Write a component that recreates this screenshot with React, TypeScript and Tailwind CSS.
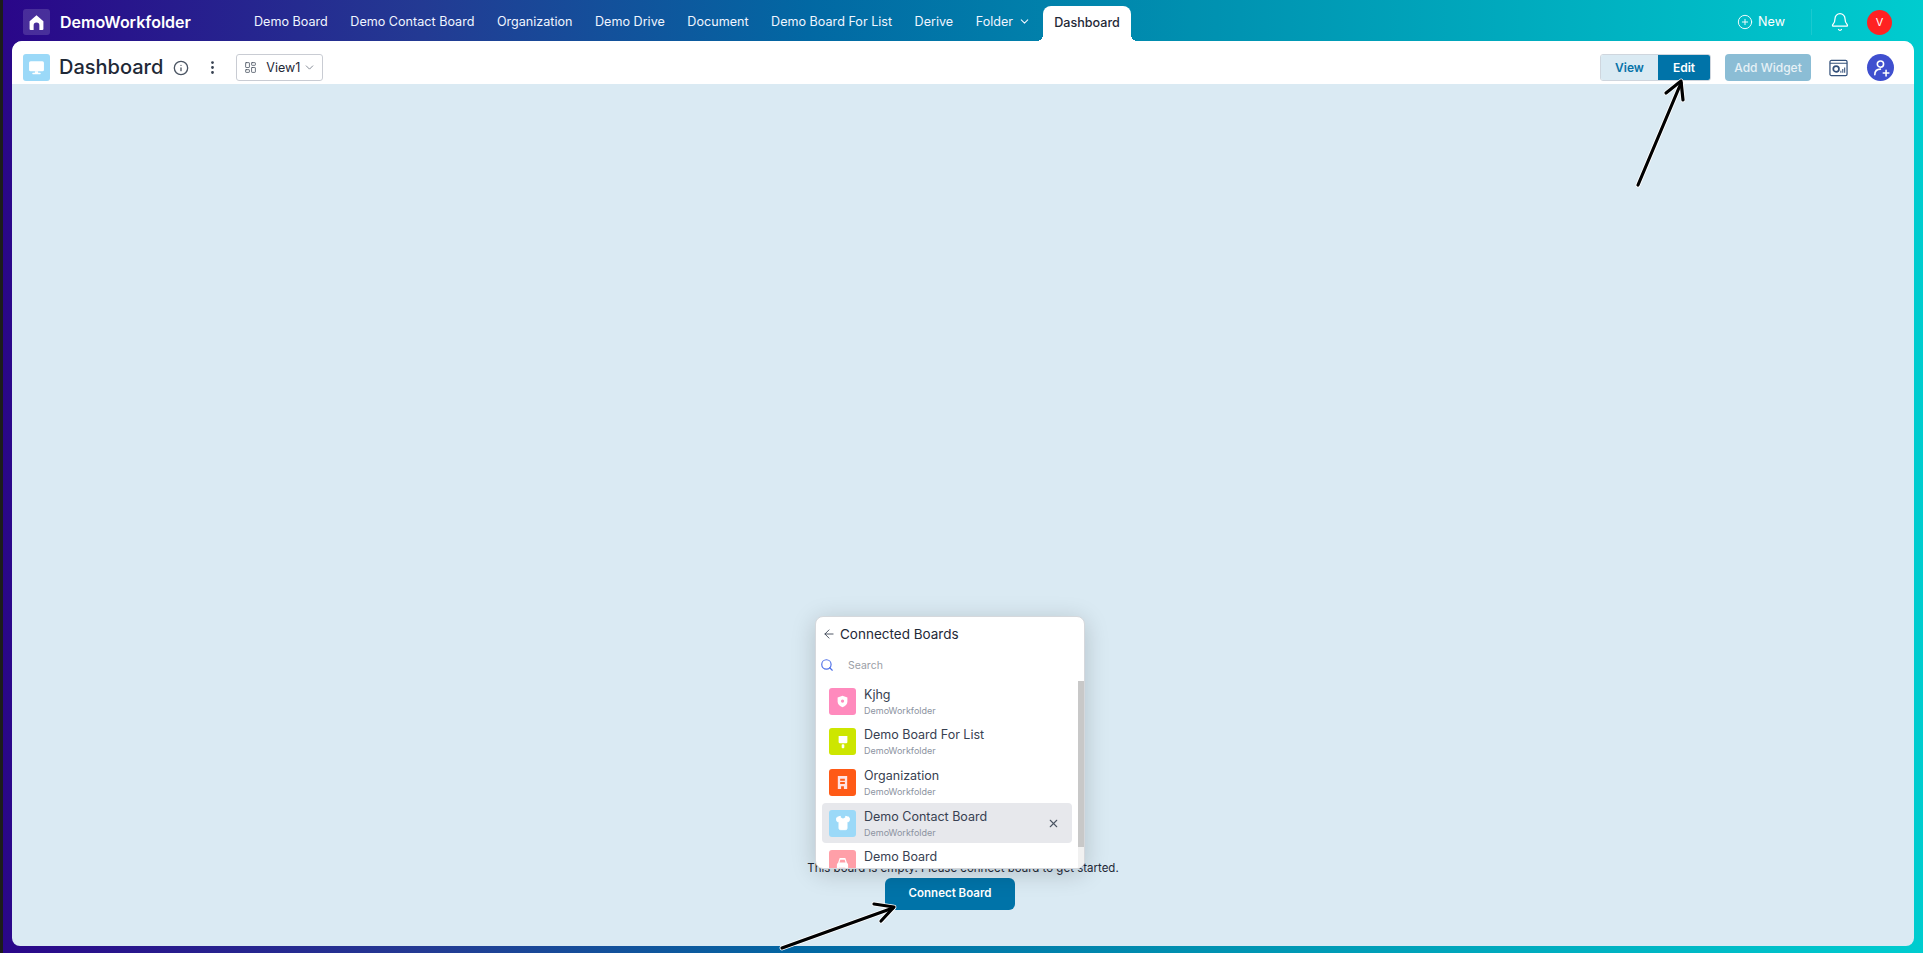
import { ArrowLeft, Bell, ChevronDown, CirclePlus, EllipsisVertical, Info, LayoutDashboard, Search, Shirt, X } from "lucide-react";

const navItems = ["Demo Board", "Demo Contact Board", "Organization", "Demo Drive", "Document", "Demo Board For List", "Derive"];

const boards = [
  { name: "Kjhg", color: "bg-[#ff8abd]", icon: "shield" },
  { name: "Demo Board For List", color: "bg-[#cde600]", icon: "brush" },
  { name: "Organization", color: "bg-[#ff5a16]", icon: "building" },
  { name: "Demo Contact Board", color: "bg-[#9bd9f8]", icon: "shirt", active: true },
  { name: "Demo Board", color: "bg-[#ff9fa8]", icon: "car" },
];

function BoardIcon({ icon }: { icon: string }) {
  if (icon === "shield") {
    return (
      <svg viewBox="0 0 16 16" className="h-[13px] w-[13px]" fill="white">
        <path d="M8 1 14 3v5c0 3.500-2.600 5.800-6 7-3.400-1.200-6-3.500-6-7V3z" />
        <circle cx="8" cy="7.500" r="2" fill="#ff8abd" />
      </svg>
    );
  }
  if (icon === "brush") {
    return (
      <svg viewBox="0 0 16 16" className="h-[14px] w-[14px]" fill="white">
        <path d="M3 1h10v7a1.500 1.500 0 0 1-1.500 1.500H4.500A1.500 1.500 0 0 1 3 8z" />
        <rect x="6.500" y="10.500" width="3" height="4.500" rx="1" />
      </svg>
    );
  }
  if (icon === "building") {
    return (
      <svg viewBox="0 0 16 16" className="h-[15px] w-[15px]" fill="#ffe3e3">
        <path fillRule="evenodd" d="M3 1h10v14H9.500v-3h-3v3H3zM5.500 4v2h5V4zm0 3.500v2h5v-2z" />
      </svg>
    );
  }
  if (icon === "shirt") {
    return <Shirt className="h-4 w-4 fill-white text-white" strokeWidth={1.500} />;
  }
  return (
    <svg viewBox="0 0 16 16" className="h-[15px] w-[15px]" fill="white">
      <path fillRule="evenodd" d="M5 2h6l1.800 5.500c.7.400 1.200 1 1.200 2V14h-3v-1.500H4V14H2V9.500c0-1 .5-1.600 1.200-2zM5.700 4 4.800 7h6.400l-.9-3z" />
    </svg>
  );
}

function ArrowMark({ points, head }: { points: string; head: string }) {
  return (
    <>
      <polyline points={points} fill="none" stroke="white" strokeWidth="4.800" strokeLinecap="round" />
      <polyline points={head} fill="none" stroke="white" strokeWidth="4.800" strokeLinecap="round" strokeLinejoin="round" />
      <polyline points={points} fill="none" stroke="black" strokeWidth="3.200" strokeLinecap="round" />
      <polyline points={head} fill="none" stroke="black" strokeWidth="3.200" strokeLinecap="round" strokeLinejoin="round" />
    </>
  );
}

export default function App() {
  return (
    <div className="relative flex h-[953px] w-[1923px] flex-col overflow-hidden bg-[linear-gradient(90deg,#2a0689_0%,#233a93_22%,#0268a3_42%,#0090b0_62%,#00cccf_100%)] pl-[12px] pr-[9px] pb-[7px] font-['Inter',sans-serif]">
      <div className="absolute bottom-0 left-0 top-0 w-[3px] bg-[#1c1c1c]" />

      {/* Top bar */}
      <div className="-ml-[12px] -mr-[9px] flex h-[41px] shrink-0 items-center pl-[23px] pr-[31px] pt-[3px]">
        <div className="flex h-[26px] w-[27px] items-center justify-center rounded-[3px] bg-white/15">
          <svg viewBox="0 0 16 16" className="h-[17px] w-[17px]" fill="white">
            <path fillRule="evenodd" d="M8 1.200 14.500 6.800V14a1 1 0 0 1-1 1h-2.800v-4.200a2.700 2.700 0 0 0-5.400 0V15H2.500a1 1 0 0 1-1-1V6.800z" />
          </svg>
        </div>
        <span className="ml-[10px] w-[194px] text-[16px] font-semibold text-white">DemoWorkfolder</span>
        <div className="flex items-center self-stretch">
          {navItems.map((item) => (
            <span key={item} className="mr-[22.5px] text-[12.6px] text-[#f0f5ff]">
              {item}
            </span>
          ))}
          <span className="flex items-center gap-[5px] text-[12.6px] text-[#f0f5ff]">
            Folder
            <ChevronDown className="h-[13px] w-[13px]" />
          </span>
          <span className="relative ml-[12px] flex h-[35px] w-[88px] items-center justify-center self-end rounded-t-[8px] bg-white pb-[1px] text-[12.6px] font-medium text-[#1f2937]">
            <span className="absolute -left-[6px] bottom-0 h-[6px] w-[6px] bg-[radial-gradient(circle_at_0_0,transparent_6px,white_6px)]" />
            Dashboard
            <span className="absolute -right-[6px] bottom-0 h-[6px] w-[6px] bg-[radial-gradient(circle_at_100%_0,transparent_6px,white_6px)]" />
          </span>
        </div>
        <div className="ml-auto flex items-center">
          <CirclePlus className="h-[16px] w-[16px] text-white" strokeWidth={1.400} />
          <span className="ml-[5px] text-[12.6px] text-white">New</span>
          <div className="ml-[26px] h-[26px] w-px bg-white/10" />
          <Bell className="ml-[18px] h-[20px] w-[20px] text-white" strokeWidth={1.500} />
          <div className="ml-[17px] flex h-[25px] w-[25px] items-center justify-center rounded-full bg-[#ff2222] text-[11px] text-white">V</div>
        </div>
      </div>

      {/* Panel */}
      <div className="flex min-h-0 flex-1 flex-col overflow-hidden rounded-t-[10px] rounded-b-[8px] bg-[#daeaf3]">
        <div className="flex h-[43px] shrink-0 items-start bg-white pl-[11px] pr-[20px] pt-[13px]">
          <div className="flex h-[27px] w-[27px] items-center justify-center rounded-[3px] bg-[#9bd9f8]">
            <svg viewBox="0 0 16 16" className="h-[17px] w-[17px]" fill="white">
              <rect x="1" y="2" width="14" height="9.500" rx="1.500" />
              <rect x="6.500" y="11.500" width="3" height="2" />
              <rect x="4" y="13" width="8" height="1.300" rx="0.600" />
            </svg>
          </div>
          <span className="ml-[9px] text-[20px] font-medium leading-[27px] text-[#1f2937]">Dashboard</span>
          <Info className="ml-[10px] mt-[6px] h-[16px] w-[16px] text-[#4b5563]" />
          <EllipsisVertical className="ml-[15px] mt-[5px] h-[17px] w-[17px] text-[#374151]" />
          <div className="ml-[15px] flex h-[27px] w-[87px] items-center rounded-[3px] border border-[#c9ccd3] bg-white pl-[7px]">
            <LayoutDashboard className="h-[13px] w-[13px] text-[#4b5563]" strokeWidth={1.500} />
            <span className="ml-[9px] mt-[1px] text-[12.5px] text-[#1f2937]">View1</span>
            <ChevronDown className="ml-[3px] h-[13px] w-[13px] text-[#6b7280]" strokeWidth={1.500} />
          </div>

          <div className="ml-auto flex h-[27px] w-[111px] overflow-hidden rounded-[3px] border border-[#cfd6de]">
            <span className="flex w-[57px] items-center justify-center bg-[#daeaf3] text-[12px] font-semibold text-[#0873a8]">View</span>
            <span className="flex flex-1 items-center justify-center bg-[#0073a8] text-[12px] font-semibold text-white">Edit</span>
          </div>
          <button className="ml-[14px] h-[27px] w-[86px] rounded-[4px] bg-[#8bbdd5] text-[12px] font-medium text-[#e6f1f6]">Add Widget</button>
          <svg viewBox="0 0 20 18" className="ml-[18px] mt-[5px] h-[18px] w-[19px]" fill="none">
            <rect x="1" y="1" width="18" height="16" rx="1.500" stroke="#33507a" strokeWidth="1.300" />
            <path d="M1 4h18" stroke="#33507a" strokeWidth="1.300" />
            <circle cx="7.500" cy="10" r="3" stroke="#33507a" strokeWidth="1.800" />
            <path d="M12.500 14v-2M14.500 14v-4M16.500 14V8.500" stroke="#33507a" strokeWidth="1.100" />
          </svg>
          <div className="ml-[19px] flex h-[27px] w-[27px] items-center justify-center rounded-full bg-[#3f4fcf]">
            <svg viewBox="0 0 16 16" className="h-[18px] w-[18px]" fill="none" stroke="white" strokeWidth="1.400" strokeLinecap="round">
              <circle cx="7.500" cy="4.500" r="2.800" />
              <path d="M2.500 14c0-3 2-5 5-5M10 12.500h5M12.500 10v5" />
            </svg>
          </div>
        </div>

        {/* Empty board */}
        <div className="relative flex flex-1 flex-col items-center justify-end pb-[36px]">
          <p className="text-[11.5px] leading-[20px] text-[#1f2937]">This board is empty. Please connect board to get started.</p>
          <div className="mr-[26px] flex h-[32px] w-[130px] items-center justify-center rounded-[6px] bg-[#0073a8] pb-[1px] text-[11.5px] font-semibold text-white">
            Connect Board
          </div>

          {/* Connected boards popover */}
          <div className="absolute bottom-[77px] left-[803px] flex h-[253px] w-[270px] flex-col overflow-hidden rounded-[8px] border border-[#d5d8dc] bg-white shadow-[0_4px_24px_rgba(0,0,0,0.18)]">
            <div className="flex h-[32px] shrink-0 items-center pl-[6px] pt-[2px]">
              <ArrowLeft className="h-[14px] w-[14px] text-[#374151]" strokeWidth={1.500} />
              <span className="ml-[4px] text-[13.5px] text-[#1f2937]">Connected Boards</span>
            </div>
            <div className="flex h-[32px] shrink-0 items-center pl-[4px] pt-[2px]">
              <Search className="h-[14px] w-[14px] -translate-y-[1px] text-[#4f70e8]" />
              <span className="ml-[14px] text-[10.5px] text-[#9a9ea6]">Search</span>
            </div>
            <div className="relative flex min-h-0 flex-1 flex-col overflow-hidden pl-[6px] pr-[12px]">
              <div className="absolute bottom-0 right-0 top-0 w-[6px] bg-[#f1f1f1]">
                <div className="h-[166px] w-full bg-[#c8c8c8]" />
              </div>
              {boards.map((board) => (
                <div
                  key={board.name}
                  className={`flex h-[40.6px] shrink-0 items-center rounded-[4px] pl-[7px] pr-[12px] ${board.active ? "bg-[#e7e8ec]" : ""}`}
                >
                  <div className={`flex h-[27px] w-[27px] shrink-0 items-center justify-center rounded-[3px] ${board.color}`}>
                    <BoardIcon icon={board.icon} />
                  </div>
                  <div className="ml-[8px] flex flex-1 flex-col">
                    <span className="text-[12.5px] leading-[19px] text-[#374151]">{board.name}</span>
                    <span className="text-[9px] leading-[14px] text-[#8c93a1]">DemoWorkfolder</span>
                  </div>
                  {board.active && <X className="h-[13px] w-[13px] text-[#4b5563]" />}
                </div>
              ))}
            </div>
          </div>
        </div>
      </div>

      {/* Annotation arrows */}
      <svg className="pointer-events-none absolute left-0 top-0 h-[953px] w-[1923px]" viewBox="0 0 1923 953">
        <ArrowMark points="1638,185 1681,83" head="1666,93 1681,81 1683,100" />
        <ArrowMark points="782,948 893,908" head="874,904 894,907 881,921" />
      </svg>
    </div>
  );
}
